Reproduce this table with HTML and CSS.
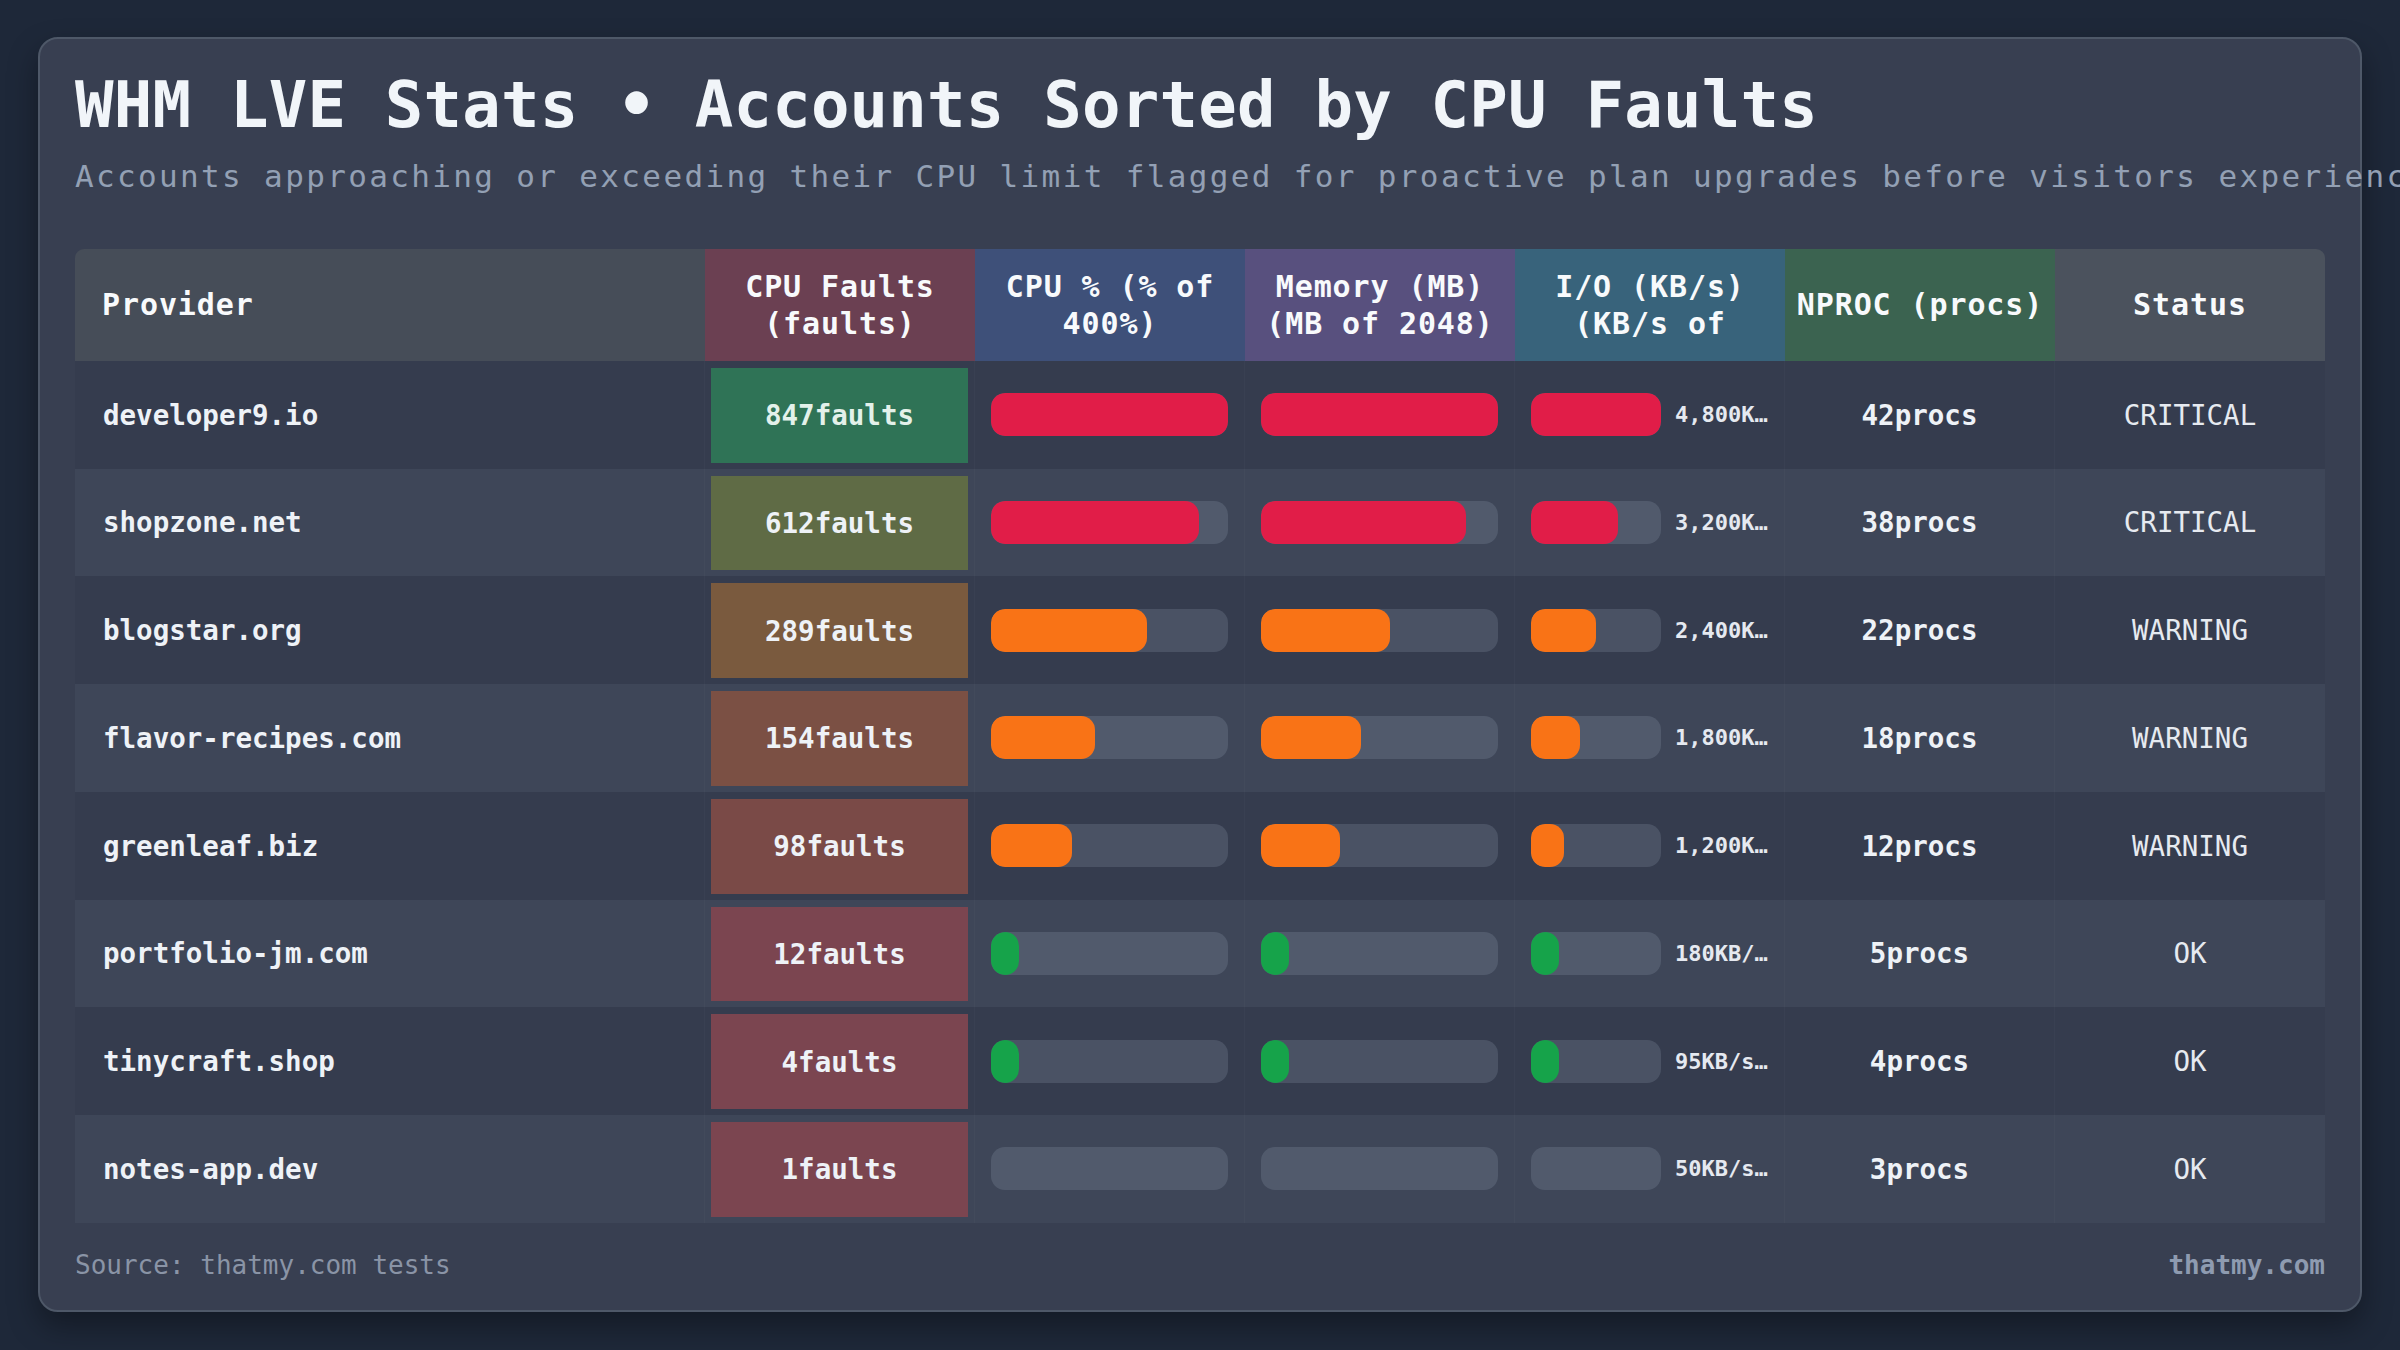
FILE: index.html
```html
<!DOCTYPE html>
<html lang="en">
<head>
<meta charset="utf-8">
<title>WHM LVE Stats</title>
<link rel="stylesheet" href="styles.css">
</head>
<body>
<div class="card">
  <h1 class="title">WHM LVE Stats • Accounts Sorted by CPU Faults</h1>
  <p class="subtitle">Accounts approaching or exceeding their CPU limit flagged for proactive plan upgrades before visitors experience slowdowns.</p>

  <div class="table">
    <div class="head">
      <div class="hcell h-provider"><div class="htxt">Provider</div></div>
      <div class="hcell h-faults"><div class="htxt">CPU Faults (faults)</div></div>
      <div class="hcell h-cpu"><div class="htxt">CPU % (% of 400%)</div></div>
      <div class="hcell h-mem"><div class="htxt">Memory (MB) (MB of 2048)</div></div>
      <div class="hcell h-io"><div class="htxt">I/O (KB/s) (KB/s of 4800)</div></div>
      <div class="hcell h-nproc"><div class="htxt">NPROC (procs)</div></div>
      <div class="hcell h-status"><div class="htxt">Status</div></div>
    </div>

    <div class="row odd">
      <div class="cell provider">developer9.io</div>
      <div class="cell faults"><div class="fbox f-847">847faults</div></div>
      <div class="cell bar"><div class="track"><div class="fill red" style="width:100%"></div></div></div>
      <div class="cell bar"><div class="track"><div class="fill red" style="width:100%"></div></div></div>
      <div class="cell bar io"><div class="track"><div class="fill red" style="width:100%"></div></div><span class="lbl">4,800KB/s</span></div>
      <div class="cell nproc">42procs</div>
      <div class="cell status">CRITICAL</div>
    </div>

    <div class="row even">
      <div class="cell provider">shopzone.net</div>
      <div class="cell faults"><div class="fbox f-612">612faults</div></div>
      <div class="cell bar"><div class="track"><div class="fill red" style="width:87.7%"></div></div></div>
      <div class="cell bar"><div class="track"><div class="fill red" style="width:86.5%"></div></div></div>
      <div class="cell bar io"><div class="track"><div class="fill red" style="width:66.7%"></div></div><span class="lbl">3,200KB/s</span></div>
      <div class="cell nproc">38procs</div>
      <div class="cell status">CRITICAL</div>
    </div>

    <div class="row odd">
      <div class="cell provider">blogstar.org</div>
      <div class="cell faults"><div class="fbox f-289">289faults</div></div>
      <div class="cell bar"><div class="track"><div class="fill orange" style="width:65.8%"></div></div></div>
      <div class="cell bar"><div class="track"><div class="fill orange" style="width:54.5%"></div></div></div>
      <div class="cell bar io"><div class="track"><div class="fill orange" style="width:50%"></div></div><span class="lbl">2,400KB/s</span></div>
      <div class="cell nproc">22procs</div>
      <div class="cell status">WARNING</div>
    </div>

    <div class="row even">
      <div class="cell provider">flavor-recipes.com</div>
      <div class="cell faults"><div class="fbox f-154">154faults</div></div>
      <div class="cell bar"><div class="track"><div class="fill orange" style="width:43.9%"></div></div></div>
      <div class="cell bar"><div class="track"><div class="fill orange" style="width:42.3%"></div></div></div>
      <div class="cell bar io"><div class="track"><div class="fill orange" style="width:37.5%"></div></div><span class="lbl">1,800KB/s</span></div>
      <div class="cell nproc">18procs</div>
      <div class="cell status">WARNING</div>
    </div>

    <div class="row odd">
      <div class="cell provider">greenleaf.biz</div>
      <div class="cell faults"><div class="fbox f-98">98faults</div></div>
      <div class="cell bar"><div class="track"><div class="fill orange" style="width:34.2%"></div></div></div>
      <div class="cell bar"><div class="track"><div class="fill orange" style="width:33.3%"></div></div></div>
      <div class="cell bar io"><div class="track"><div class="fill orange" style="width:25%"></div></div><span class="lbl">1,200KB/s</span></div>
      <div class="cell nproc">12procs</div>
      <div class="cell status">WARNING</div>
    </div>

    <div class="row even">
      <div class="cell provider">portfolio-jm.com</div>
      <div class="cell faults"><div class="fbox f-low">12faults</div></div>
      <div class="cell bar"><div class="track"><div class="fill green" style="width:5%"></div></div></div>
      <div class="cell bar"><div class="track"><div class="fill green" style="width:5%"></div></div></div>
      <div class="cell bar io"><div class="track"><div class="fill green" style="width:3.75%"></div></div><span class="lbl">180KB/s.</span></div>
      <div class="cell nproc">5procs</div>
      <div class="cell status">OK</div>
    </div>

    <div class="row odd">
      <div class="cell provider">tinycraft.shop</div>
      <div class="cell faults"><div class="fbox f-low">4faults</div></div>
      <div class="cell bar"><div class="track"><div class="fill green" style="width:3%"></div></div></div>
      <div class="cell bar"><div class="track"><div class="fill green" style="width:3%"></div></div></div>
      <div class="cell bar io"><div class="track"><div class="fill green" style="width:2%"></div></div><span class="lbl">95KB/s..</span></div>
      <div class="cell nproc">4procs</div>
      <div class="cell status">OK</div>
    </div>

    <div class="row even">
      <div class="cell provider">notes-app.dev</div>
      <div class="cell faults"><div class="fbox f-low">1faults</div></div>
      <div class="cell bar"><div class="track"></div></div>
      <div class="cell bar"><div class="track"></div></div>
      <div class="cell bar io"><div class="track"></div><span class="lbl">50KB/s..</span></div>
      <div class="cell nproc">3procs</div>
      <div class="cell status">OK</div>
    </div>
  </div>

  <div class="footer">
    <span class="source">Source: thatmy.com tests</span>
    <span class="brand">thatmy.com</span>
  </div>
</div>
</body>
</html>
```

FILE: styles.css
```css
html, body {
  margin: 0;
  padding: 0;
  overflow: hidden;
}

body {
  width: 2400px;
  height: 1350px;
  box-sizing: border-box;
  padding: 37px 38px 0;
  background: #1e2839;
  font-family: "DejaVu Sans Mono", "Liberation Mono", monospace;
  color: #eef2f7;
}

.card {
  box-sizing: border-box;
  width: 2324px;
  height: 1275px;
  padding: 28px 35px 0;
  background: #383f51;
  border: 2px solid #4e5868;
  border-radius: 20px;
  box-shadow: 0 14px 30px rgba(0, 0, 0, 0.35);
}

.title {
  margin: 0;
  font-size: 64px;
  line-height: 76.8px;
  font-weight: 700;
  letter-spacing: 0.2px;
  color: #f1f5f9;
  white-space: nowrap;
}

.subtitle {
  margin: 13px 0 0;
  font-size: 31px;
  line-height: 39px;
  letter-spacing: 2.35px;
  color: #93a0b4;
  white-space: nowrap;
}

.table {
  margin-top: 53px;
}

.head,
.row {
  display: grid;
  grid-template-columns: 630px repeat(6, 1fr);
}

.head {
  height: 112px;
}

.hcell {
  display: flex;
  align-items: center;
  justify-content: center;
  padding: 0 10px;
  text-align: center;
  font-size: 30px;
  font-weight: 700;
  letter-spacing: 0.9px;
  color: #f8fafc;
  overflow: hidden;
}

.htxt {
  line-height: 37px;
  max-height: 74px;
  overflow: hidden;
}

.h-provider {
  justify-content: flex-start;
  text-align: left;
  padding-left: 27px;
  background: #464d58;
  border-top-left-radius: 9px;
}
.h-faults { background: #6b4052; }
.h-cpu { background: #3e5079; }
.h-mem { background: #58507e; }
.h-io { background: #38637b; }
.h-nproc { background: #3b6350; }
.h-status {
  background: #4b525d;
  border-top-right-radius: 9px;
}

.row {
  height: 107.75px;
}
.row.odd { background: #353c4e; }
.row.even { background: #3e4658; }

.cell {
  display: flex;
  align-items: center;
  font-size: 27.5px;
  font-weight: 700;
  color: #eef2f7;
  border-right: 1px solid rgba(255, 255, 255, 0.025);
  min-width: 0;
}
.cell:last-child { border-right: none; }

.provider {
  padding-left: 28px;
}

.faults {
  align-items: stretch;
  padding: 7px 6px 6px;
}

.fbox {
  flex: 1;
  display: flex;
  align-items: center;
  justify-content: center;
}
.f-847 { background: #2f7356; color: #e3f1ea; }
.f-612 { background: #5f6b45; }
.f-289 { background: #7a5a3e; }
.f-154 { background: #7b5044; }
.f-98 { background: #7a4a47; }
.f-low { background: #7b4550; }

.bar {
  padding: 0 16px;
  gap: 14px;
}

.track {
  flex: 1;
  height: 43px;
  border-radius: 14px;
  background: rgba(148, 163, 184, 0.22);
  overflow: hidden;
}

.io .track {
  flex: 0 0 130px;
}

.fill {
  height: 100%;
  min-width: 28px;
  border-radius: 14px;
}
.red { background: #e11d48; }
.orange { background: #f97316; }
.green { background: #16a34a; }

.lbl {
  flex: 1;
  min-width: 0;
  font-size: 22px;
  font-weight: 700;
  color: #e5e9f0;
  white-space: nowrap;
  overflow: hidden;
  text-overflow: ellipsis;
}

.nproc {
  justify-content: center;
}

.status {
  justify-content: center;
  font-weight: 400;
  color: #e6eaf0;
}

.footer {
  margin-top: 27px;
  display: flex;
  justify-content: space-between;
  font-size: 26px;
}

.source {
  color: #8a94a6;
}

.brand {
  font-weight: 700;
  color: #8e9bb0;
}
```
